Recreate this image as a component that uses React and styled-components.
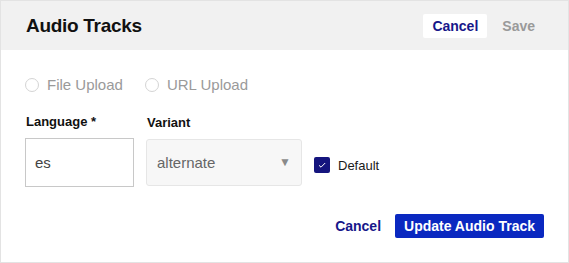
import React, { useState } from 'react';
import styled, { createGlobalStyle } from 'styled-components';

const GlobalStyle = createGlobalStyle`
  html, body {
    margin: 0;
    padding: 0;
    background: #fff;
  }
  body {
    font-family: "Liberation Sans", Arial, sans-serif;
    color: #1a1a1a;
  }
`;

const Panel = styled.div`
  width: 569px;
  height: 263px;
  box-sizing: border-box;
  border: 1px solid #e3e3e3;
  display: flex;
  flex-direction: column;
`;

const Header = styled.div`
  height: 49px;
  background: #f1f1f1;
  display: flex;
  align-items: center;
  justify-content: space-between;
  padding: 0 24px 0 25px;
`;

const Title = styled.h2`
  margin: 0;
  font-size: 19px;
  font-weight: 700;
  color: #111;
  letter-spacing: -0.3px;
`;

const HeaderActions = styled.div`
  display: flex;
  align-items: center;
  gap: 6px;
`;

const TextButton = styled.button`
  font-family: inherit;
  font-size: 14px;
  font-weight: 700;
  border: none;
  border-radius: 2px;
  height: 24px;
  padding: 0 9px;
  cursor: pointer;
  background: ${p => (p.$filled ? '#fff' : 'transparent')};
  color: ${p => (p.$disabled ? '#9a9a9a' : '#17178a')};
`;

const Body = styled.div`
  flex: 1;
  padding: 26px 24px 0 24px;
  display: flex;
  flex-direction: column;
`;

const RadioRow = styled.div`
  display: flex;
  gap: 22px;
  margin-bottom: 21px;
`;

const RadioLabel = styled.label`
  display: flex;
  align-items: center;
  gap: 8px;
  font-size: 15px;
  color: #9a9a9a;
`;

const RadioDot = styled.span`
  width: 12px;
  height: 12px;
  border: 1px solid #d4d4d4;
  border-radius: 50%;
  box-sizing: content-box;
`;

const FieldRow = styled.div`
  display: flex;
  align-items: flex-end;
  gap: 12px;
`;

const Field = styled.div`
  display: flex;
  flex-direction: column;
  gap: 9px;
`;

const Label = styled.span`
  font-size: 13px;
  font-weight: 700;
  color: #111;
  padding-left: 1px;
`;

const TextInput = styled.input`
  box-sizing: border-box;
  width: 109px;
  height: 49px;
  border: 1px solid #c8c8c8;
  padding: 0 9px;
  font-family: inherit;
  font-size: 15px;
  color: #444;
  outline: none;
`;

const SelectBox = styled.div`
  box-sizing: border-box;
  width: 156px;
  height: 47px;
  margin-bottom: 1px;
  border: 1px solid #e6e6e6;
  border-radius: 3px;
  background: #f7f7f7;
  display: flex;
  align-items: center;
  justify-content: space-between;
  padding: 0 10px 0 10px;
  font-size: 15px;
  color: #666;
`;

const Arrow = styled.span`
  font-size: 12px;
  color: #8a8a8a;
  margin-top: -2px;
`;

const CheckLabel = styled.label`
  display: flex;
  align-items: center;
  gap: 8px;
  font-size: 13px;
  color: #1a1a1a;
  margin-bottom: 14px;
`;

const CheckBox = styled.span`
  width: 16px;
  height: 16px;
  border-radius: 2px;
  background: #15157e;
  display: flex;
  align-items: center;
  justify-content: center;
`;

const Footer = styled.div`
  display: flex;
  justify-content: flex-end;
  align-items: center;
  gap: 14px;
  padding-top: 27px;
`;

const PrimaryButton = styled.button`
  font-family: inherit;
  font-size: 14px;
  font-weight: 700;
  color: #fff;
  background: #0a28c0;
  border: none;
  border-radius: 2px;
  height: 24px;
  padding: 0 9px;
  cursor: pointer;
`;

const FooterCancel = styled(TextButton)`
  padding: 0;
`;

export default function App() {
  const [lang, setLang] = useState('es');
  return (
    <>
      <GlobalStyle />
      <Panel>
        <Header>
          <Title>Audio Tracks</Title>
          <HeaderActions>
            <TextButton $filled>Cancel</TextButton>
            <TextButton $disabled>Save</TextButton>
          </HeaderActions>
        </Header>
        <Body>
          <RadioRow>
            <RadioLabel><RadioDot />File Upload</RadioLabel>
            <RadioLabel><RadioDot />URL Upload</RadioLabel>
          </RadioRow>
          <FieldRow>
            <Field>
              <Label>Language *</Label>
              <TextInput value={lang} onChange={e => setLang(e.target.value)} />
            </Field>
            <Field>
              <Label>Variant</Label>
              <SelectBox>
                alternate
                <Arrow>▼</Arrow>
              </SelectBox>
            </Field>
            <CheckLabel>
              <CheckBox>
                <svg width="10" height="8" viewBox="0 0 10 8">
                  <path d="M2 4.3 L4 6.2 L8.2 2" fill="none" stroke="#fff" strokeWidth="1" />
                </svg>
              </CheckBox>
              Default
            </CheckLabel>
          </FieldRow>
          <Footer>
            <FooterCancel>Cancel</FooterCancel>
            <PrimaryButton>Update Audio Track</PrimaryButton>
          </Footer>
        </Body>
      </Panel>
    </>
  );
}
